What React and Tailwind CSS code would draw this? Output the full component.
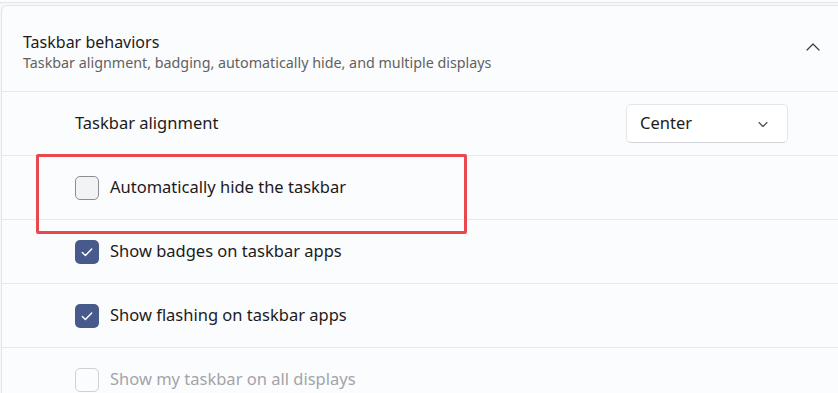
import React from 'react';

const Check = () => (
  <svg width="14" height="14" viewBox="0 0 14 14" fill="none">
    <path d="M2.3 7.4l3.1 3.1 6.3-6.6" stroke="white" strokeWidth="1.4" strokeLinecap="round" strokeLinejoin="round" />
  </svg>
);

function CheckRow({ label, checked, disabled }) {
  return (
    <div className="h-[64px] border-t border-[#e6e8ee] flex items-center pl-[73px]">
      {checked ? (
        <div className="w-[24px] h-[24px] rounded-[5px] bg-[#485a8b] flex items-center justify-center">
          <Check />
        </div>
      ) : (
        <div
          className={`w-[24px] h-[24px] rounded-[5px] border ${
            disabled ? 'border-[#d0d1d4] bg-[#fbfcfe]' : 'border-[#8b8c8f] bg-[#f2f3f5]'
          }`}
        />
      )}
      <span className={`ml-[11px] text-[16.5px] ${disabled ? 'text-[#a3a4a7]' : 'text-[#1b1b1b]'}`}>
        {label}
      </span>
    </div>
  );
}

export default function App() {
  return (
    <div className="relative w-[838px] h-[393px] overflow-hidden bg-[#f6f7fa] font-['Noto_Sans',sans-serif]">
      {/* previous card edge */}
      <div className="h-[3px] border-b border-[#e3e5eb] bg-[#fbfcfe]" />

      <div className="mt-[2px] ml-[1px] rounded-tl-[6px] border-l border-t border-[#e3e5eb] bg-[#fbfcfe]">
        {/* header */}
        <div className="h-[85px] flex items-center justify-between pl-[21px] pr-[17px]">
          <div className="pt-[7px]">
            <div className="text-[16px] leading-[22px] text-[#1b1b1b]">Taskbar behaviors</div>
            <div className="text-[14.3px] leading-[20px] text-[#616161]">
              Taskbar alignment, badging, automatically hide, and multiple displays
            </div>
          </div>
          <svg width="16" height="16" viewBox="0 0 16 16" fill="none" className="-mt-[3px]">
            <path d="M2 11l6-6 6 6" stroke="#3a3a3a" strokeWidth="1.2" strokeLinecap="round" strokeLinejoin="round" />
          </svg>
        </div>

        {/* alignment row */}
        <div className="h-[64px] border-t border-[#e6e8ee] flex items-center justify-between pl-[73px] pr-[50px]">
          <span className="text-[16.5px] text-[#1b1b1b]">Taskbar alignment</span>
          <div className="w-[162px] h-[39px] rounded-[5px] bg-white border border-[#e5e6ea] border-b-[#d4d5d9] flex items-center justify-between pl-[13px] pr-[18px]">
            <span className="text-[16.5px] text-[#1b1b1b]">Center</span>
            <svg width="12" height="12" viewBox="0 0 12 12" fill="none">
              <path d="M2 4.5l4 4 4-4" stroke="#4a4a4a" strokeWidth="1.1" strokeLinecap="round" strokeLinejoin="round" />
            </svg>
          </div>
        </div>

        <CheckRow label="Automatically hide the taskbar" />
        <CheckRow label="Show badges on taskbar apps" checked />
        <CheckRow label="Show flashing on taskbar apps" checked />
        <CheckRow label="Show my taskbar on all displays" disabled />
      </div>

      {/* highlight box */}
      <div className="absolute left-[36px] top-[154px] w-[431px] h-[80px] border-[3px] border-[#e9484e] rounded-[2px]" />
    </div>
  );
}
